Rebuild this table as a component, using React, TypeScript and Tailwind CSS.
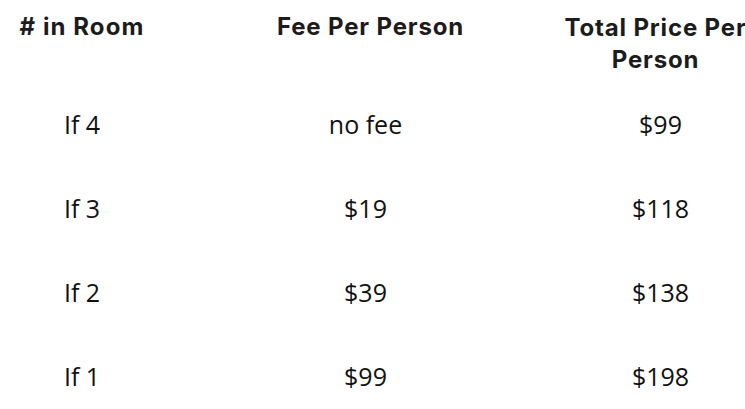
const rows = [
  { count: "If 4", fee: "no fee", total: "$99" },
  { count: "If 3", fee: "$19", total: "$118" },
  { count: "If 2", fee: "$39", total: "$138" },
  { count: "If 1", fee: "$99", total: "$198" },
];

export default function App() {
  return (
    <div className="w-[745px] h-[409px] overflow-hidden bg-white">
      <div className="ml-[-63px] w-[880px] grid grid-cols-[290px_277px_313px]">
        <div className="pt-[11px] pb-[8px] px-4 h-[83px] text-center font-['Inter',sans-serif] font-bold text-[24px] leading-[32px] tracking-[0.045em] text-[#1c1c1c]">
          # in Room
        </div>
        <div className="pt-[11px] pb-[8px] pl-[26px] pr-4 h-[83px] text-center font-['Inter',sans-serif] font-bold text-[24px] leading-[32px] tracking-[0.035em] text-[#221a1a]">
          Fee Per Person
        </div>
        <div className="pt-[12px] pb-[8px] pl-4 pr-[26px] h-[83px] flex justify-center">
          <div className="w-[260px] text-center font-['Inter',sans-serif] font-bold text-[24px] leading-[32px] tracking-[0.035em] text-[#1c1c1c]">
            Total Price Per Person
          </div>
        </div>
        {rows.map((r) => (
          <div key={r.count} className="contents">
            <div className="h-[84px] flex items-center justify-center font-['Open_Sans',sans-serif] text-[25px] text-[#111]">
              {r.count}
            </div>
            <div className="h-[84px] flex items-center justify-center font-['Open_Sans',sans-serif] text-[25px] text-[#111]">
              {r.fee}
            </div>
            <div className="h-[84px] flex items-center justify-center font-['Open_Sans',sans-serif] text-[25px] text-[#111]">
              {r.total}
            </div>
          </div>
        ))}
      </div>
    </div>
  );
}
